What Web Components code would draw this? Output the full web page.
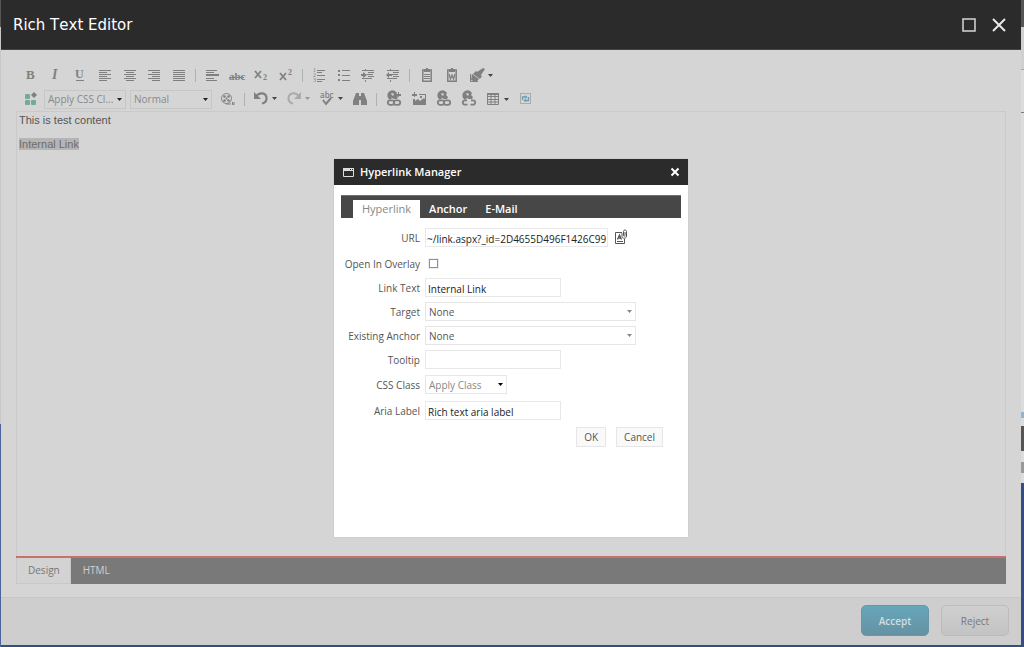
<!DOCTYPE html>
<html lang="en">
<head>
<meta charset="utf-8">
<title>Rich Text Editor</title>
<style>
html, body { margin: 0; height: 100%; }
body { font-family: "Open Sans", "Noto Sans", sans-serif; font-size: 10px; line-height: 16px; color: #555; }
</style>
</head>
<body>
<rte-page></rte-page>
<script>
const define = (name, html, setup) => customElements.define(name, class extends HTMLElement {
  constructor() {
    super();
    const t = document.createElement('template');
    t.innerHTML = html;
    this.attachShadow({ mode: 'open' }).append(t.content.cloneNode(true));
  }
  connectedCallback() { if (setup && !this.ready) { this.ready = true; setup(this, this.shadowRoot); } }
});

/* Toolbar icons, all on a 16x16 grid */
const L = (...rows) => rows.map(([x, y, w, h = 1]) => `<rect x="${x}" y="${y}" width="${w}" height="${h}"/>`).join('');
const T = (s, x, y, size, extra = '') => `<text x="${x}" y="${y}" font-family="Liberation Serif, serif" font-size="${size}" ${extra}>${s}</text>`;
const globe = '<path fill-rule="evenodd" d="M2 7a5 5 0 0 1 9-5l-1 2 2 2-1 2H8L6 7 4 9 3 8zM5 3l2 2 1-2-2-1z"/>';
const chain = '<g fill="none" stroke="currentColor" stroke-width="1.8"><rect x="1.8" y="9.300" width="6.400" height="4.600" rx="2.300"/><rect x="7.800" y="9.300" width="6.400" height="4.600" rx="2.300"/></g>';
const clip = '<path fill="none" stroke="currentColor" stroke-width="1.5" d="M5 3H3.800v11.200h8.400V3H11"/><path d="M5 2h2V1h2v1h2v3H5z"/>';
const icons = {
  bold: T('B', 3, 12, 13, 'font-weight="bold"'),
  italic: T('I', 4, 12, 14, 'font-style="italic" font-weight="bold"'),
  underline: T('U', 3, 11, 12, 'font-weight="bold"') + L([4, 13, 8]),
  left: L([2, 3, 12], [2, 5, 8], [2, 7, 12], [2, 9, 8], [2, 11, 12], [2, 13, 8]),
  center: L([2, 3, 12], [4, 5, 8], [2, 7, 12], [4, 9, 8], [2, 11, 12], [4, 13, 8]),
  right: L([2, 3, 12], [6, 5, 8], [2, 7, 12], [6, 9, 8], [2, 11, 12], [6, 13, 8]),
  justify: L([2, 3, 12], [2, 5, 12], [2, 7, 12], [2, 9, 12], [2, 11, 12], [2, 13, 12]),
  rule: L([2, 3, 11], [2, 5, 8], [2, 7, 13, 2], [2, 11, 8], [2, 13, 11]),
  strike: T('abc', 0, 13, 11, 'font-weight="bold"') + L([0, 10, 15]),
  sub: '<path d="M2 4l6 7M8 4l-6 7" stroke="currentColor" stroke-width="1.800"/>' + T('2', 10, 13, 8, 'font-weight="bold"'),
  sup: '<path d="M2 6l6 7M8 6l-6 7" stroke="currentColor" stroke-width="1.800"/>' + T('2', 10, 8, 8, 'font-weight="bold"'),
  ol: T('1', 2, 5, 6) + T('2', 2, 10, 6) + T('3', 2, 15, 6) + L([6, 3, 8], [6, 8, 8], [6, 12, 8], [6, 5, 5], [6, 14, 5]),
  ul: L([2, 3, 2, 2], [2, 7, 2, 2], [2, 12, 2, 2], [6, 3, 8], [6, 8, 8], [6, 13, 8]),
  indent: L([2, 3, 12], [8, 5, 6], [7, 7, 6], [8, 9, 6], [2, 11, 10], [5, 2, 1], [5, 13, 1, 2]) + '<path d="M3 5l4 3-4 3V9H1V7h2z"/>',
  outdent: L([2, 3, 12], [8, 5, 6], [7, 7, 6], [8, 9, 6], [2, 11, 10], [5, 2, 1], [5, 13, 1, 2]) + '<path d="M4 5L1 8l3 3V9h3V7H4z"/>',
  paste: clip + L([5, 7, 6], [5, 9, 6], [5, 11, 6]),
  word: clip + '<path fill="none" stroke="currentColor" stroke-width="1.300" d="M5 7l1.500 5L8 8l1.500 4L11 7"/>',
  brush: '<path d="M14 1l2 1-4 6-4-3zM7 4l6 5-2 3-7-5zM3 7l7 5-3 3-5-2z"/><path fill="none" stroke="currentColor" d="M1.500 7v7.500H9"/>',
  css: '<g fill="#75aa96"><rect x="2" y="3" width="5" height="5" rx="1"/><rect x="2" y="9" width="5" height="5" rx="1"/><rect x="8" y="9" width="5" height="5" rx="1"/></g><path d="M11 1l3 3-3 3-3-3z"/>',
  media: '<g fill="none" stroke="currentColor"><circle cx="6.500" cy="7.500" r="5"/><path d="M6 13h5M12.500 11v2.500H14V11"/></g><circle cx="6.500" cy="7.500" r="1"/><circle cx="4.500" cy="5.500" r="1.300"/><circle cx="8.500" cy="5.500" r="1.300"/><circle cx="4.500" cy="9.500" r="1.300"/><circle cx="8.500" cy="9.500" r="1.300"/>',
  undo: '<path fill="none" stroke="currentColor" stroke-width="2.200" d="M2.500 6C7 0 13.500 2 13.500 7.500c0 3-2 4.500-4.500 5"/><path d="M1 1v7h7z"/>',
  redo: '<path fill="none" stroke="currentColor" stroke-width="2" d="M13.500 6C9 0 2.500 2 2.500 7.500c0 3 2 4.500 4.500 5"/><path d="M15 1v7H8z"/>',
  spell: '<text x="1" y="7" font-family="Open Sans, sans-serif" font-size="8" font-weight="600">abc</text><path fill="none" stroke="currentColor" stroke-width="2" d="M4 9l3 4 5-6"/>',
  find: '<path d="M4 2h3v3h2V2h3l3 8v4H9V9H7v5H1v-4z"/>',
  link: globe + chain + L([10, 3, 5, 2], [12, 1, 1, 5]),
  image: L([1, 3, 5, 2], [3, 1, 1, 5]) + '<path fill-rule="evenodd" d="M8 3h7v11H2V8h2v2l3-2 2 2 4-3 1 1V4H8zM9 5h2v2H9z"/>',
  chain: globe + chain,
  unchain: globe + '<path fill="none" stroke="currentColor" stroke-width="1.800" d="M6 9.300H4a2.200 2.200 0 0 0 0 4.400h2.500M10 9.300h2a2.200 2.200 0 0 1 0 4.400H9.500"/>',
  table: '<path fill="none" stroke="currentColor" d="M2.500 2.500h11v11h-11zM2.500 5.500h11M2.500 8.500h11M2.500 11h11M6 4v10M10 4v10"/>' + L([2, 2, 12, 2]),
  snippet: '<rect x="2.500" y="2.500" width="10" height="10" fill="none" stroke="currentColor" stroke-dasharray="1 1"/><g fill="none" stroke="#649cbb" stroke-width="1.300"><path d="M4.500 9V6H8M10.500 6v3.500H7"/></g><path fill="#649cbb" d="M7.500 4l2 2-2 2zM7.500 7.500l-2 2 2 2z"/>'
};
const arrow = '<svg class="arrow" width="5" height="3" viewBox="0 0 5 3" aria-hidden="true"><path d="M0 0h5L2.500 3z" fill="currentColor"/></svg>';

define('tool-button', `<style>
:host { display: flex; flex: 1 1 0; justify-content: center; align-items: center; height: 24px; color: #808080; }
:host([menu]) { flex: 0 0 auto; width: 33px; }
:host([disabled]) { color: #aaa; }
button { all: unset; display: flex; align-items: center; gap: 3px; cursor: pointer; }
.arrow { color: #444; margin-right: 1px; }
:host([disabled]) .arrow { color: #999; }
svg { display: block; flex: none; overflow: visible; }
</style><button type="button"></button>`, (el, root) => {
  const b = root.querySelector('button');
  b.setAttribute('aria-label', el.getAttribute('icon'));
  b.innerHTML = `<svg width="16" height="16" viewBox="0 0 16 16" fill="currentColor" aria-hidden="true">${icons[el.getAttribute('icon')]}</svg>` + (el.hasAttribute('menu') ? arrow : '');
});

define('tool-group', `<style>
:host { display: flex; flex: none; width: var(--w, auto); }
:host([split])::before { content: ""; width: 1px; height: 13px; margin: 6px 4px; background: #b0b0b0; }
.items { display: flex; flex: 1; }
</style><div class="items"><slot></slot></div>`);

define('select-box', `<style>
:host { display: grid; flex: none; height: 19px; box-sizing: border-box; border: 1px solid #c6c6c6; align-items: center; }
select { all: unset; box-sizing: border-box; width: 100%; padding: 0 10px 0 3px; font: inherit; line-height: 17px; white-space: nowrap; }
select, .arrow { grid-area: 1 / 1; }
.arrow { justify-self: end; margin-right: 3px; color: #222; pointer-events: none; }
</style><select></select>${arrow}`, (el, root) => {
  const s = root.querySelector('select');
  s.add(new Option(el.getAttribute('value')));
  s.setAttribute('aria-label', el.getAttribute('label'));
});

define('form-row', `<style>
:host { display: grid; grid-template-columns: 79px 1fr; column-gap: 5px; align-items: center; height: 24px; }
:host([tall]) { height: 26px; }
:host([wide]) { height: 28px; }
label { text-align: right; white-space: nowrap; padding-top: 1px; }
.field { display: flex; align-items: center; gap: 6px; }
input[type=text] { box-sizing: border-box; width: 136px; height: 19px; margin: 0; padding: 3px 2px 0; border: 1px solid #e8e8e8; background: #fff; font: inherit; line-height: 14px; color: #222; outline: none; }
:host([wide]) input[type=text] { width: 183px; padding: 3px 1px 0; }
.select { display: grid; align-items: center; width: 211px; height: 19px; box-sizing: border-box; border: 1px solid #e6e6e6; }
:host([compact]) .select { width: 82px; color: #888; --arrow: #000; }
select { all: unset; box-sizing: border-box; width: 100%; padding: 1px 16px 0 3px; font: inherit; line-height: 16px; }
.select > * { grid-area: 1 / 1; }
.arrow { justify-self: end; margin-right: 3px; color: var(--arrow, #888); pointer-events: none; }
input[type=checkbox] { appearance: none; width: 9px; height: 9px; margin: 0 4px; border: 1px solid #4ba8c6; background: #fff; outline: 1px solid #eee; }
</style><label for="control"></label><div class="field"></div>`, (el, root) => {
  const type = el.getAttribute('type') || 'text', value = el.getAttribute('value') || '';
  root.querySelector('label').textContent = el.getAttribute('label');
  const control = document.createElement(type === 'select' ? 'select' : 'input');
  control.id = 'control';
  const field = root.querySelector('.field');
  if (type === 'select') {
    control.add(new Option(value));
    field.innerHTML = `<div class="select">${arrow}</div>`;
    field.firstChild.prepend(control);
  } else {
    control.type = type;
    if (type === 'text') control.setAttribute('value', value);
    field.append(control);
  }
  field.append(document.createElement('slot'));
});

define('action-button', `<style>
:host { display: block; flex: none; }
button { display: block; box-sizing: border-box; width: 100%; height: 20px; padding: 0 7px; border: 1px solid #e6e6e6; background: #f9f9f9; color: #555; font: inherit; line-height: 18px; cursor: pointer; }
:host([large]) button { width: 68px; height: 31px; border-radius: 5px; border-color: #bcbcbc; background: linear-gradient(#d0d0d0, #c3c3c3); color: #777; }
:host([primary]) button { border-color: #6796a7; background: linear-gradient(#67a6bb, #6592a2); color: #d3dde0; font-weight: 600; }
</style><button type="button"><slot></slot></button>`);

define('hyperlink-dialog', `<style>
:host { display: flex; flex-direction: column; width: 354px; min-height: 378px; background: #fff; box-shadow: 0 0 1px #aaa; }
header { display: flex; align-items: center; gap: 5px; height: 26px; padding: 0 8px; background: #2b2b2b; color: #fff; }
h2 { flex: 1; margin: 0; font-size: 11px; line-height: 16px; font-weight: 600; }
header button { all: unset; display: flex; cursor: pointer; }
nav { display: flex; align-items: flex-end; height: 23px; margin: 10px 7px 0; padding-left: 12px; background: #474747; border-top: 1px solid #707070; box-sizing: border-box; }
nav a { padding: 0 9px; font-size: 11px; line-height: 18px; color: #fff; font-weight: 600; text-decoration: none; }
nav a.on { background: #fff; color: #888; font-weight: 400; }
form { padding: 5px 7px 0; }
.attach { all: unset; display: flex; cursor: pointer; }
.actions { display: flex; justify-content: flex-end; gap: 10px; padding: 4px 18px 0 0; }
</style>
<header><svg width="13" height="12" viewBox="0 0 13 12" aria-hidden="true"><path d="M1.500 3.500h10v7h-10z" fill="none" stroke="#ddd"/><path d="M1 2h11v3H1z" fill="#ddd"/><path d="M8 3h1v1H8zM10 3h1v1h-1z" fill="#2b2b2b"/></svg>
<h2>Hyperlink Manager</h2>
<button type="button" aria-label="Close"><svg width="10" height="10" viewBox="0 0 10 10"><path d="M1.500 1.500l7 7M8.500 1.500l-7 7" stroke="#fff" stroke-width="2"/></svg></button></header>
<nav><a class="on" href="#link">Hyperlink</a><a href="#anchor">Anchor</a><a href="#mail">E-Mail</a></nav>
<form>
<form-row wide label="URL" value="~/link.aspx?_id=2D4655D496F1426C99"><button class="attach" type="button" aria-label="Browse"><svg width="14" height="16" viewBox="0 0 14 16" fill="none" stroke="#555"><path d="M8 3.500H1.500v11h9V10M3 12.500h6"/><path d="M3.500 10.500L5.500 6l2 4.500M4 9h3" stroke-width="1.300"/><path d="M8 4v3.500C8 10 12.500 10 12.500 7V2.500C12.500.5 9.500.5 9.500 2.500V6.500C9.500 7.500 11 7.500 11 6.500V3"/></svg></button></form-row>
<form-row label="Open In Overlay" type="checkbox"></form-row>
<form-row label="Link Text" value="Internal Link"></form-row>
<form-row label="Target" type="select" value="None"></form-row>
<form-row label="Existing Anchor" type="select" value="None"></form-row>
<form-row label="Tooltip"></form-row>
<form-row tall compact label="CSS Class" type="select" value="Apply Class"></form-row>
<form-row tall label="Aria Label" value="Rich text aria label"></form-row>
<div class="actions"><action-button>OK</action-button><action-button>Cancel</action-button></div>
</form>`);

define('rte-toolbar', `<style>
:host { display: block; padding: 0 3px; }
.row { display: flex; align-items: center; height: 24px; }
select-box { width: 82px; margin: 0 3px 0 1px; color: #888; }
</style>
<div class="row">
<tool-group style="--w:172px"><tool-button icon="bold"></tool-button><tool-button icon="italic"></tool-button><tool-button icon="underline"></tool-button><tool-button icon="left"></tool-button><tool-button icon="center"></tool-button><tool-button icon="right"></tool-button><tool-button icon="justify"></tool-button></tool-group>
<tool-group split style="--w:107px"><tool-button icon="rule"></tool-button><tool-button icon="strike"></tool-button><tool-button icon="sub"></tool-button><tool-button icon="sup"></tool-button></tool-group>
<tool-group split style="--w:107px"><tool-button icon="ol"></tool-button><tool-button icon="ul"></tool-button><tool-button icon="indent"></tool-button><tool-button icon="outdent"></tool-button></tool-group>
<tool-group split style="--w:60px"><tool-button icon="paste"></tool-button><tool-button icon="word"></tool-button></tool-group>
<tool-group><tool-button icon="brush" menu></tool-button></tool-group>
</div>
<div class="row">
<tool-group style="--w:24px"><tool-button icon="css"></tool-button></tool-group>
<select-box label="CSS class" value="Apply CSS Cl..."></select-box>
<select-box label="Paragraph style" value="Normal"></select-box>
<tool-group style="--w:25px"><tool-button icon="media"></tool-button></tool-group>
<tool-group split><tool-button icon="undo" menu></tool-button><tool-button icon="redo" menu disabled></tool-button><tool-button icon="spell" menu></tool-button></tool-group>
<tool-group style="--w:24px"><tool-button icon="find"></tool-button></tool-group>
<tool-group split style="--w:109px"><tool-button icon="link"></tool-button><tool-button icon="image"></tool-button><tool-button icon="chain"></tool-button><tool-button icon="unchain"></tool-button></tool-group>
<tool-group><tool-button icon="table" menu></tool-button></tool-group>
<tool-group style="--w:24px"><tool-button icon="snippet"></tool-button></tool-group>
</div>`);

define('editor-area', `<style>
:host { display: flex; flex-direction: column; flex: 1; min-height: 0; }
.body { flex: 1; border: 1px solid #cacaca; border-bottom: 0; padding: 1px 2px; font: 11px/15px "Liberation Sans", Arial, sans-serif; color: #555; }
p { margin: 0 0 9px; }
mark { background: #b5b5b5; color: #6c6c6c; }
nav { display: flex; height: 28px; box-sizing: border-box; background: #797979; border-top: 2px solid #c9706c; }
nav a { padding: 0 12px; line-height: 25px; color: #d0d0d0; text-decoration: none; }
nav a.on { background: #d3d3d3; color: #777; border: 1px solid #c8c8c8; border-top: 0; padding: 0 10px 0 11px; }
</style>
<div class="body"><p>This is test content</p><p><mark>Internal Link</mark></p></div>
<nav><a class="on" href="#design">Design</a><a href="#html">HTML</a></nav>`);

define('editor-window', `<style>
:host { display: flex; flex-direction: column; position: relative; flex: 1; background: #d5d5d5; }
header { display: flex; align-items: center; gap: 14px; height: 50px; box-sizing: border-box; padding: 0 14px 0 12px; background: #2b2b2b; color: #fff; border-bottom: 1px solid #444; }
h1 { flex: 1; margin: 0; font: 15px/20px "DejaVu Sans", sans-serif; font-kerning: none; }
header button { all: unset; display: flex; cursor: pointer; }
main { display: flex; flex-direction: column; flex: 1; padding: 13px 15px 13px; }
footer { display: flex; justify-content: flex-end; gap: 12px; padding: 7px 12px 9px; background: #cecece; border-top: 1px solid #c7c7c7; }
.overlay { position: absolute; inset: 0; display: flex; justify-content: center; align-items: flex-start; padding-top: 159px; }
</style>
<header><h1>Rich Text Editor</h1>
<button type="button" aria-label="Maximize"><svg width="16" height="16" viewBox="0 0 16 16"><path d="M2 2h12v12H2z" fill="none" stroke="#d8d8d8" stroke-width="1.500"/></svg></button>
<button type="button" aria-label="Close"><svg width="16" height="16" viewBox="0 0 16 16"><path d="M2 2l12 12M14 2L2 14" stroke="#e8e8e8" stroke-width="2"/></svg></button></header>
<main><rte-toolbar></rte-toolbar><editor-area></editor-area></main>
<footer><action-button large primary>Accept</action-button><action-button large>Reject</action-button></footer>
<div class="overlay"><hyperlink-dialog></hyperlink-dialog></div>`);

define('rte-page', `<style>
:host { display: flex; box-sizing: border-box; min-height: 100vh; padding: 0 3px 2px 1px; background:
 linear-gradient(#555 0 27px, #d0d0d0 27px 69px, #aaa 69px 70px, #dcdcdc 70px 112px, #6c7e92 112px 113px, #dcdcdc 113px 412px, #8db5d8 412px 418px, #dcdcdc 418px 426px, #555 426px 451px, #dcdcdc 451px 462px, #999 462px 473px, #dcdcdc 473px 483px, #344d82 483px) right / 3px 100% no-repeat,
 linear-gradient(#555 0 27px, #c8c8c8 27px 424px, #4d6296 424px) left / 1px 100% no-repeat, #344d82; }
</style><editor-window></editor-window>`);
</script>
</body>
</html>
